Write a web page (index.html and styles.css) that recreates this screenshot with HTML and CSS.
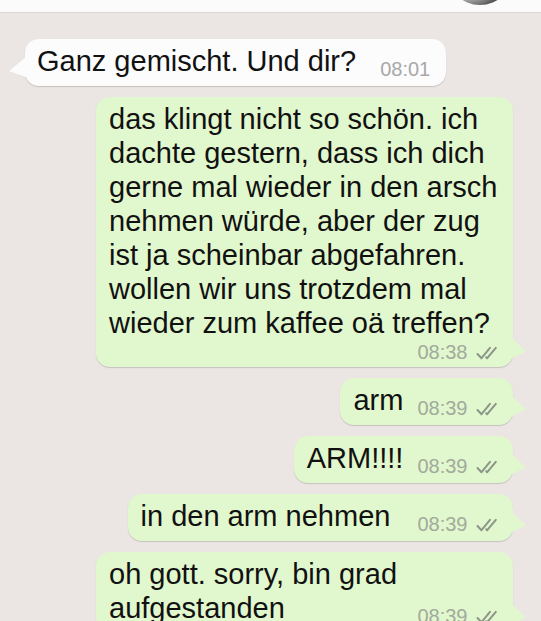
FILE: index.html
```html
<!DOCTYPE html>
<html lang="de">
<head>
<meta charset="UTF-8" />
<meta name="viewport" content="width=device-width, initial-scale=1.0" />
<title>Chat</title>
<link rel="stylesheet" href="styles.css">
</head>
<body>
<header class="topbar">
  <div class="avatar"></div>
</header>
<div class="chat">
  <div class="bubble in">
    <span class="text">Ganz gemischt. Und dir?</span><span class="meta">08:01</span>
  </div>
  <div class="bubble out long">
    <span class="text">das klingt nicht so schön. ich dachte gestern, dass ich dich gerne mal wieder in den arsch nehmen würde, aber der zug ist ja scheinbar abgefahren. wollen wir uns trotzdem mal wieder zum kaffee oä treffen?</span><span class="meta">08:38 <svg class="ticks" viewBox="0 0 24 14"><path d="M1.5 8l4 4.2L14 1.8M10.2 11.2l1 1L19.8 1.8"/></svg></span>
  </div>
  <div class="bubble out">
    <span class="text">arm</span><span class="meta">08:39 <svg class="ticks" viewBox="0 0 24 14"><path d="M1.5 8l4 4.2L14 1.8M10.2 11.2l1 1L19.8 1.8"/></svg></span>
  </div>
  <div class="bubble out">
    <span class="text">ARM!!!!</span><span class="meta">08:39 <svg class="ticks" viewBox="0 0 24 14"><path d="M1.5 8l4 4.2L14 1.8M10.2 11.2l1 1L19.8 1.8"/></svg></span>
  </div>
  <div class="bubble out">
    <span class="text">in den arm nehmen</span><span class="meta spaced">08:39 <svg class="ticks" viewBox="0 0 24 14"><path d="M1.5 8l4 4.2L14 1.8M10.2 11.2l1 1L19.8 1.8"/></svg></span>
  </div>
  <div class="bubble out">
    <span class="text">oh gott. sorry, bin grad aufgestanden</span><span class="meta">08:39 <svg class="ticks" viewBox="0 0 24 14"><path d="M1.5 8l4 4.2L14 1.8M10.2 11.2l1 1L19.8 1.8"/></svg></span>
  </div>
</div>
</body>
</html>
```

FILE: styles.css
```css
body { margin: 0; background: #ebe6e4; font-family: "Liberation Sans", Arial, sans-serif; color: #111; overflow: hidden; }
.topbar { height: 12px; background: #fcfbfb; border-bottom: 1px solid #ddd2d5; display: flex; justify-content: flex-end; padding-right: 28px; overflow: hidden; }
.avatar { width: 66px; height: 66px; margin-top: -61px; border-radius: 50%; background: radial-gradient(circle at 30% 40%, #f4f4f4 0%, #d8d8d8 45%, #4a4a4a 75%, #2c2c2c 100%); }
.chat { display: flex; flex-direction: column; align-items: flex-start; gap: 11px; padding: 26px 28px 0 25px; }
.bubble { position: relative; display: flow-root; max-width: 417px; box-sizing: border-box; padding: 5px 13px 8px 13px; border-radius: 14px; font-size: 29px; line-height: 34px; box-shadow: 0 1px 1px rgba(0,0,0,0.16); }
.bubble.in { background: #fcfcfc; padding-left: 12px; padding-right: 16px; max-width: 440px; }
.bubble.out { align-self: flex-end; background: #e1f7cd; }
.bubble.long { width: 417px; padding-bottom: 7px; }
.bubble::after { content: ""; position: absolute; bottom: 9px; width: 14px; height: 20px; background: inherit; }
.bubble.in::after { left: -16px; width: 17px; clip-path: polygon(100% 0, 0 70%, 100% 100%); }
.bubble.out::after { right: -13px; clip-path: polygon(0 0, 100% 68%, 0 100%); }
.meta { float: right; position: relative; top: 8px; margin-left: 14px; font-size: 20px; line-height: 34px; color: #a2aa9c; white-space: nowrap; }
.meta.spaced { margin-left: 27px; }
.bubble.in .meta { color: #a8a8a8; margin-left: 24px; }
.bubble.long .meta { float: none; display: block; text-align: right; line-height: 20px; top: 2px; margin-left: 0; }
.ticks { width: 24px; height: 14px; margin-left: 3px; vertical-align: -1px; fill: none; stroke: #8c9788; stroke-width: 2; stroke-linecap: round; stroke-linejoin: round; }
```
